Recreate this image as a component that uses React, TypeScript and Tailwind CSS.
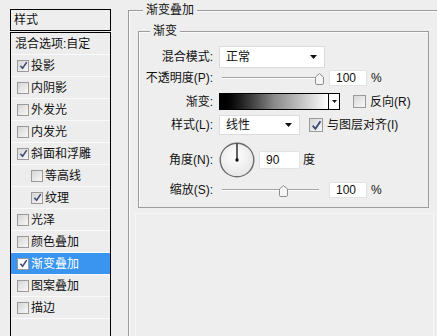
import type { ReactNode } from "react";

type Item = { label: string; checked?: boolean; indent?: boolean; selected?: boolean; plain?: boolean };

const items: Item[] = [
  { label: "混合选项:自定", plain: true },
  { label: "投影", checked: true },
  { label: "内阴影" },
  { label: "外发光" },
  { label: "内发光" },
  { label: "斜面和浮雕", checked: true },
  { label: "等高线", indent: true },
  { label: "纹理", checked: true, indent: true },
  { label: "光泽" },
  { label: "颜色叠加" },
  { label: "渐变叠加", checked: true, selected: true },
  { label: "图案叠加" },
  { label: "描边" },
];

function Check({ checked, size = 12, white }: { checked?: boolean; size?: number; white?: boolean }) {
  return (
    <span
      className={
        "flex shrink-0 items-center justify-center border border-[#9a9a9a] " +
        (white ? "bg-white" : "bg-gradient-to-br from-[#d6d6d6] to-[#f8f8f8]")
      }
      style={{ width: size, height: size }}
    >
      {checked ? (
        <svg width={size - 3} height={size - 3} viewBox="0 0 10 10">
          <path d="M1.5 5.2 L4 8 L8.6 1.2" fill="none" stroke="#3b4a72" strokeWidth="1.7" />
        </svg>
      ) : null}
    </span>
  );
}

function Arrow() {
  return (
    <svg width="7" height="4" viewBox="0 0 7 4">
      <path d="M0 0 H7 L3.5 4 Z" fill="#111" />
    </svg>
  );
}

function Row({ label, className, children }: { label: string; className: string; children: ReactNode }) {
  return (
    <div className={"flex items-center " + className}>
      <span className="w-[74px] shrink-0 text-right leading-[14px]">{label}</span>
      <div className="ml-[6px] flex h-full items-center">{children}</div>
    </div>
  );
}

function Slider({ thumb }: { thumb: number }) {
  return (
    <div className="relative h-[16px] w-[102px]">
      <div className="absolute left-[3px] right-[2px] top-[7px] h-[2px] border-t border-[#a3a3a3] border-b border-b-white" />
      <svg className="absolute top-[3px]" style={{ left: thumb }} width="9" height="12" viewBox="0 0 9 12">
        <path d="M0.5 4 L4.5 0.6 L8.5 4 V10.2 Q8.5 11.5 7.2 11.5 H1.8 Q0.5 11.5 0.5 10.2 Z" fill="#f5f5f5" stroke="#8d8d8d" />
      </svg>
    </div>
  );
}

function Field({ value, w, h = 16 }: { value: string; w: number; h?: number }) {
  return (
    <div
      className="flex items-center border border-[#e2e2e2] bg-white pl-[6px] leading-[14px]"
      style={{ width: w, height: h }}
    >
      {value}
    </div>
  );
}

export default function App() {
  return (
    <div className="flex h-[336px] w-[437px] overflow-hidden bg-[#eeeeee] font-['Liberation_Sans','Noto_Sans_CJK_SC',sans-serif] text-[12px] text-[#111]">
      <div className="ml-[10px] mt-[9px] flex w-[101px] shrink-0 flex-col">
        <div className="h-[22px] border border-black px-[3px] leading-[20px]">样式</div>
        <div className="mt-[1px] flex-1 border-x border-t border-black bg-[#ededed]">
          {items.map((it) => (
            <div
              key={it.label}
              className={
                "flex h-[22px] items-center border-b border-[#fafafa] " +
                (it.selected ? "bg-[#3995ef] text-white" : "") +
                (it.indent ? " pl-[20px]" : " pl-[6px]")
              }
            >
              {it.plain ? (
                <span className="-ml-[2px] leading-[14px]">{it.label}</span>
              ) : (
                <>
                  <Check checked={it.checked} white={it.selected} />
                  <span className="ml-[2px] leading-[14px]">{it.label}</span>
                </>
              )}
            </div>
          ))}
        </div>
      </div>

      <div className="relative ml-[17px] mt-[10px] flex flex-1 flex-col border-l border-t border-[#9a9a9a] shadow-[inset_1px_1px_0_#fbfbfb]">
        <span className="absolute left-[14px] top-[-9px] bg-[#eeeeee] px-[3px] leading-[16px]">渐变叠加</span>

        <div className="relative ml-[9px] mt-[20px] flex h-[177px] w-[291px] shrink-0 flex-col border border-[#9c9c9c] pt-[14px] shadow-[inset_1px_1px_0_#fbfbfb]">
          <span className="absolute left-[11px] top-[-9px] bg-[#eeeeee] px-[3px] leading-[16px]">渐变</span>

          <Row label="混合模式:" className="h-[22px]">
            <div className="flex h-[22px] w-[106px] items-center justify-between border border-[#dcdcdc] bg-white pl-[6px] pr-[7px] leading-[14px]">
              <span>正常</span>
              <Arrow />
            </div>
          </Row>

          <Row label="不透明度(P):" className="mt-[2px] h-[16px]">
            <Slider thumb={96} />
            <div className="ml-[8px]">
              <Field value="100" w={38} />
            </div>
            <span className="ml-[4px]">%</span>
          </Row>

          <Row label="渐变:" className="mt-[7px] h-[17px]">
            <div className="h-[17px] w-[110px] border border-black bg-gradient-to-r from-black via-[#8a8a8a] to-white" />
            <div className="flex h-[17px] w-[11px] items-center justify-center border border-l-0 border-black bg-white">
              <svg width="5" height="3" viewBox="0 0 5 3">
                <path d="M0 0 H5 L2.5 3 Z" fill="#111" />
              </svg>
            </div>
            <span className="ml-[13px]">
              <Check size={13} />
            </span>
            <span className="ml-[4px] leading-[14px]">反向(R)</span>
          </Row>

          <Row label="样式(L):" className="mt-[5px] h-[20px]">
            <div className="flex h-[20px] w-[81px] items-center justify-between border border-[#dcdcdc] bg-white pl-[6px] pr-[7px] leading-[14px]">
              <span>线性</span>
              <Arrow />
            </div>
            <span className="ml-[9px]">
              <Check checked size={14} />
            </span>
            <span className="ml-[4px] leading-[14px]">与图层对齐(I)</span>
          </Row>

          <Row label="角度(N):" className="mt-[7px] h-[36px]">
            <svg width="36" height="36" viewBox="0 0 36 36">
              <defs>
                <radialGradient id="dial" cx="0.45" cy="0.4" r="0.6">
                  <stop offset="0" stopColor="#ffffff" />
                  <stop offset="1" stopColor="#e6e6e6" />
                </radialGradient>
              </defs>
              <circle cx="18" cy="18" r="16.8" fill="url(#dial)" stroke="#6c6c6c" strokeWidth="1.4" />
              <line x1="18" y1="18" x2="18" y2="1.5" stroke="#111" strokeWidth="1.3" />
              <circle cx="18" cy="18" r="1.7" fill="#111" />
            </svg>
            <div className="ml-[4px]">
              <Field value="90" w={41} h={18} />
            </div>
            <span className="ml-[3px] leading-[14px]">度</span>
          </Row>

          <Row label="缩放(S):" className="mt-[4px] h-[16px]">
            <Slider thumb={60} />
            <div className="ml-[8px]">
              <Field value="100" w={38} />
            </div>
            <span className="ml-[4px]">%</span>
          </Row>
        </div>

        <div className="ml-[6px] mt-[5px] w-[299px] flex-1 border-x border-t border-[#f6f6f6]" />
      </div>
    </div>
  );
}
